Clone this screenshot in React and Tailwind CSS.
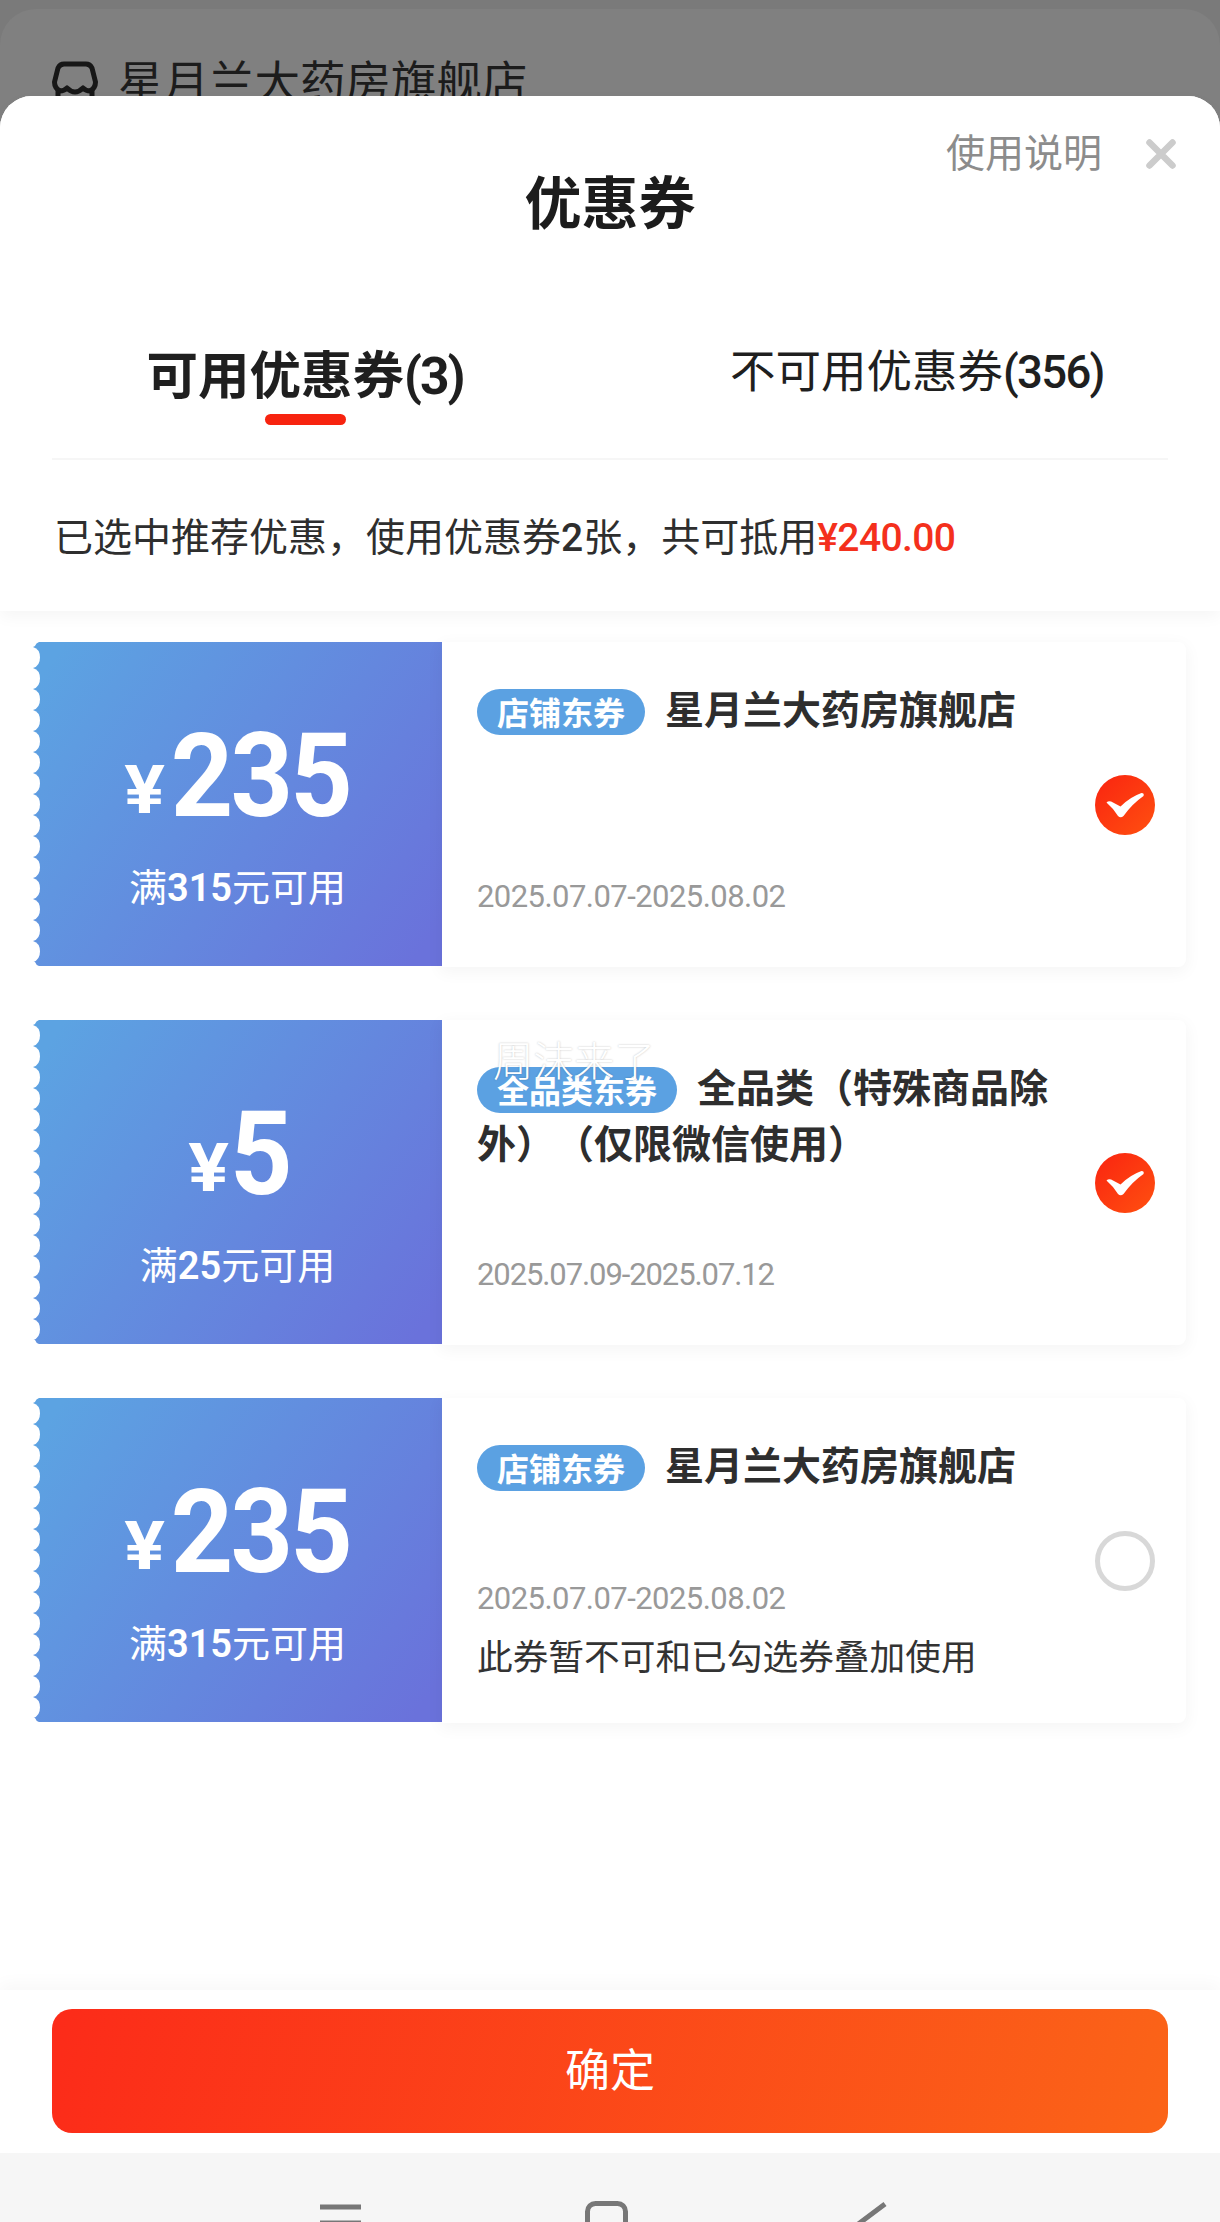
import React, { useState } from 'react';

const coupons = [
  {
    amount: '235',
    condition: ['满', '315', '元可用'],
    tag: '店铺东券',
    title: '星月兰大药房旗舰店',
    date: '2025.07.07-2025.08.02',
    dateClass: 'tracking-[-0.55px]',
    checked: true,
  },
  {
    amount: '5',
    condition: ['满', '25', '元可用'],
    tag: '全品类东券',
    title: '全品类（特殊商品除外）（仅限微信使用）',
    date: '2025.07.09-2025.07.12',
    dateClass: 'tracking-[-1.1px]',
    checked: true,
    toast: '周沫来了',
  },
  {
    amount: '235',
    condition: ['满', '315', '元可用'],
    tag: '店铺东券',
    title: '星月兰大药房旗舰店',
    date: '2025.07.07-2025.08.02',
    dateClass: 'tracking-[-0.55px]',
    note: '此券暂不可和已勾选券叠加使用',
    checked: false,
  },
];

// white bites along the left edge of a coupon
function Scallops() {
  const bites = Array.from({ length: 15 }, (_, i) => i);
  return (
    <svg className="absolute left-0 top-0" width="8" height="324" viewBox="0 0 8 324">
      <path d="M0 0H6Q3 1 2 4L0 5Z" fill="#fff" />
      {bites.map((i) => (
        <path key={i} d={`M-1 ${5 + i * 21}H0Q7 ${7 + i * 21} 7 ${15.5 + i * 21}T0 ${26 + i * 21}H-1Z`} fill="#fff" />
      ))}
      <path d="M0 319L2 320Q3 323 6 324H0Z" fill="#fff" />
    </svg>
  );
}

function CheckMark({ checked }) {
  if (!checked) {
    return <span className="block size-[60px] rounded-full border-[5px] border-[#d8d8d8]" />;
  }
  return (
    <svg width="60" height="60" viewBox="0 0 60 60">
      <defs>
        <linearGradient id="check" x1="0" y1="0" x2="1" y2="1">
          <stop offset="0" stopColor="#fa2410" />
          <stop offset="1" stopColor="#ff5010" />
        </linearGradient>
      </defs>
      <circle cx="30" cy="30" r="30" fill="url(#check)" />
      <path d="M11.500 27.500Q14 25 18 27.500L25.500 31.500Q35 22 46.500 18Q49.500 18 48.500 21Q37 29 28.500 41Q25.500 43.500 23 41Q18 33 11.500 27.500Z" fill="#fff" />
    </svg>
  );
}

function Coupon({ coupon, onToggle }) {
  const [before, num, after] = coupon.condition;
  return (
    <div className="flex h-[325px] w-[1153px]">
      <div className="relative flex h-[324px] w-[409px] shrink-0 flex-col items-center bg-linear-[125deg,#5ca3e2_5%,#6a72db_95%] pt-[74px] text-white">
        <Scallops />
        <div className="flex items-baseline pl-2 font-[Roboto,sans-serif] leading-[120px] font-bold">
          <span className="relative -top-[3px] inline-block scale-x-115 text-[66px] leading-none">¥</span>
          <span className="ml-[2px] inline-block scale-x-94 text-[116px] tracking-[-3px]">{coupon.amount}</span>
        </div>
        <div className="mt-[21px] text-[38px] leading-[56px]">
          {before}
          <span className="font-[Roboto,sans-serif] font-semibold">{num}</span>
          {after}
        </div>
      </div>
      <div className="relative flex flex-1 rounded-r-lg bg-white pl-[35px] shadow-[0_4px_16px_2px_rgba(0,0,0,0.04)]">
        <div className="flex w-[590px] flex-col pt-[37px]">
          <div className="text-[39px] leading-[56px] font-bold text-[#2e2e2e] [text-spacing-trim:space-all]">
            <span className="mr-[20px] inline-block h-[46px] rounded-full bg-[#5ba1e2] px-5 align-[-1px] text-[32px] leading-[44px] text-white">
              {coupon.tag}
            </span>
            {coupon.title}
          </div>
          <div className={coupon.note ? 'mt-auto mb-[40px]' : 'mt-auto mb-[48px]'}>
            <div className={`font-[Roboto,sans-serif] text-[31px] leading-[44px] text-[#999] ${coupon.dateClass}`}>{coupon.date}</div>
            {coupon.note && <div className="mt-[6px] text-[35.7px] leading-[56px] text-[#333]">{coupon.note}</div>}
          </div>
        </div>
        <button className="mr-[31px] ml-auto self-center" onClick={onToggle}>
          <CheckMark checked={coupon.checked} />
        </button>
        {coupon.toast && (
          <span className="absolute top-[11px] left-[51px] text-[40.500px] leading-[56px] font-light text-white [text-shadow:0_0_2px_rgba(0,0,0,0.25)]">
            {coupon.toast}
          </span>
        )}
      </div>
    </div>
  );
}

export default function App() {
  const [list, setList] = useState(coupons);

  const toggle = (index) => {
    setList(list.map((c, i) => (i === index ? { ...c, checked: !c.checked } : c)));
  };

  return (
    <div className="relative flex h-[2222px] w-[1220px] flex-col overflow-hidden bg-[#7a7a7a] pt-[9px] font-['Noto_Sans_CJK_SC',sans-serif]">
      <div className="flex h-[147px] shrink-0 items-start rounded-t-[36px] bg-[#808080] pt-[40px] pl-[52px] text-[#1c1c1c]">
        <svg className="mt-[12px]" width="46" height="46" viewBox="0 0 46 46" fill="none" stroke="#171717" strokeWidth="5" strokeLinejoin="round">
          <path d="M12 3H34Q38 3 40 7L43.500 21Q43.500 27 38 30Q34 30 31 27Q27 31 23 31Q19 31 15 27Q12 30 8 30Q2.500 27 2.500 21L6 7Q8 3 12 3Z" />
          <path d="M6 27V43H40V27" />
        </svg>
        <span className="ml-[20px] text-[45.500px] leading-[60px]">星月兰大药房旗舰店</span>
      </div>

      <div className="relative -mt-[60px] flex flex-1 flex-col rounded-t-[32px] bg-white">
        <div className="relative z-10 h-[515px] shrink-0 rounded-t-[32px] bg-white shadow-[0_6px_16px_rgba(0,0,0,0.04)]">
          <div className="flex h-[116px] items-center justify-end pr-[43px] text-[39px] text-[#8c8c8c]">
            <span className="pb-[7px]">使用说明</span>
            <svg className="ml-[43px]" width="32" height="32" viewBox="0 0 32 32" stroke="#ccc" strokeWidth="6.500" strokeLinecap="round">
              <path d="M4.500 4.500L27.500 27.500M27.500 4.500L4.500 27.500" />
            </svg>
          </div>
          <h1 className="-mt-[53px] text-center text-[57px] leading-[80px] font-bold text-[#1c1c1c]">优惠券</h1>

          <div className="mx-[52px] mt-[70px] flex h-[151px] border-b-2 border-[#f6f6f6] pt-[26px] text-[#1f1f1f]">
            <div className="flex w-1/2 flex-col items-center pr-[52px]">
              <span className="text-[51.500px] leading-[74px] font-bold">
                可用优惠券<span className="font-[Roboto,sans-serif] tracking-[-2px]">(3)</span>
              </span>
              <span className="h-[11px] w-[81px] rounded-full bg-[#f7230f]" />
            </div>
            <div className="w-1/2 pt-[1px] pl-[120px] text-[45.500px] leading-[64px]">
              不可用优惠券<span className="font-[Roboto,sans-serif] font-medium tracking-[-1.7px]">(356)</span>
            </div>
          </div>

          <p className="pt-[46px] pl-[54px] text-[39px] leading-[56px] text-[#2e2e2e]">
            已选中推荐优惠，使用优惠券<span className="font-[Roboto,sans-serif] font-medium">2</span>张，共可抵用
            <span className="font-[Roboto,sans-serif] font-medium tracking-[-0.6px] text-[#f4301c]">¥240.00</span>
          </p>
        </div>

        <div className="flex flex-1 flex-col gap-[53px] pt-[31px] pl-[33px]">
          {list.map((c, i) => (
            <Coupon key={i} coupon={c} onToggle={() => toggle(i)} />
          ))}
        </div>

        <div className="h-[163px] shrink-0 bg-white px-[52px] pt-[19px] shadow-[0_-6px_16px_rgba(0,0,0,0.03)]">
          <button className="h-[124px] w-full rounded-[20px] bg-linear-[105deg,#fc2b19,#fb6418] pb-[6px] text-[45px] text-white">确定</button>
        </div>
        <div className="h-[69px] shrink-0 bg-[#f6f6f6]">
          <svg width="1220" height="69" viewBox="0 0 1220 69" fill="none" stroke="#777" strokeWidth="5">
            <path d="M320 54H361M320 70H361" />
            <rect x="587.500" y="50.500" width="38" height="38" rx="8" />
            <path d="M885 51L861 69L885 87" />
          </svg>
        </div>
      </div>
    </div>
  );
}
